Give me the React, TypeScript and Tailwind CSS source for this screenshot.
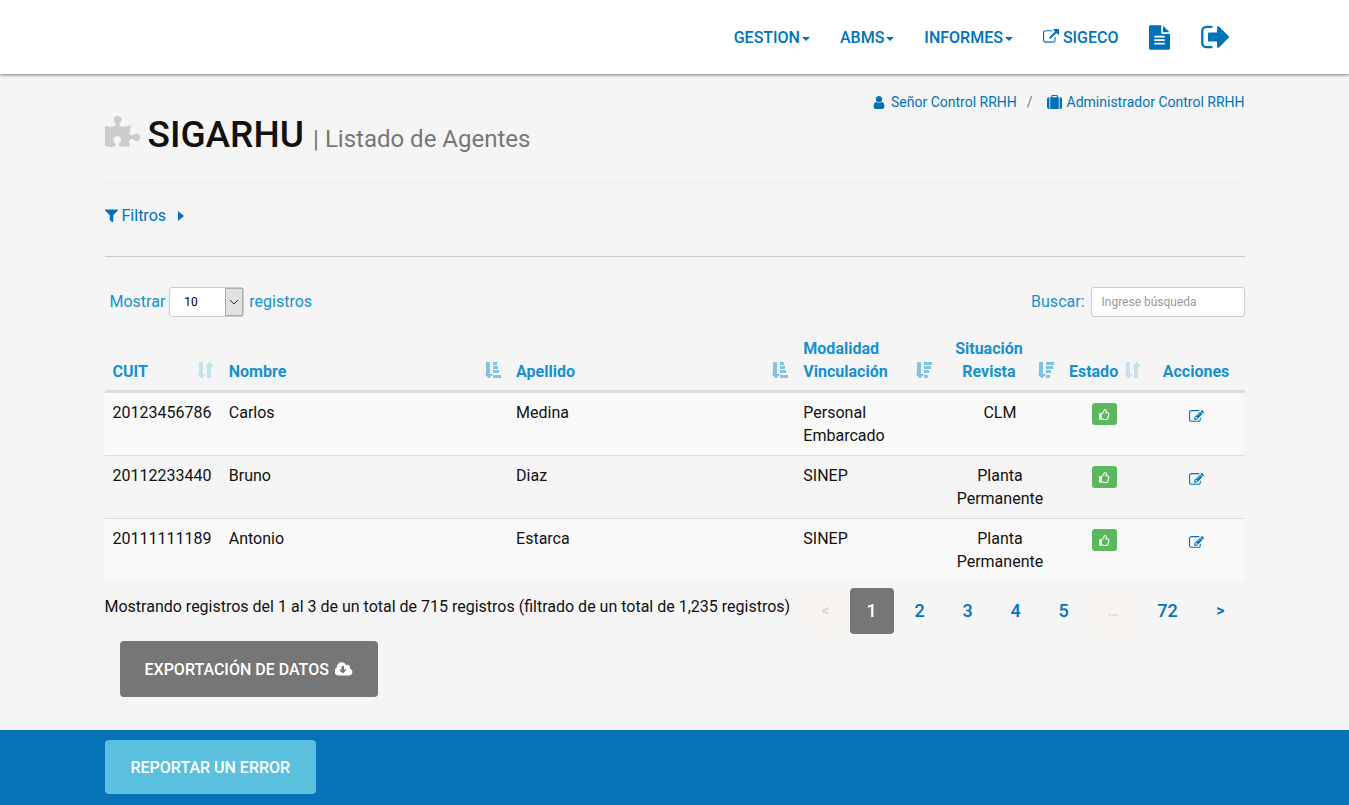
import React from "react";
import { FaPuzzlePiece, FaRegThumbsUp } from "react-icons/fa";

const ICONS = {
  externalLink:
    "M1408 928v320q0 119-84.5 203.5t-203.5 84.5h-832q-119 0-203.5-84.5t-84.5-203.5v-832q0-119 84.5-203.5t203.5-84.5h704q14 0 23 9t9 23v64q0 14-9 23t-23 9h-704q-66 0-113 47t-47 113v832q0 66 47 113t113 47h832q66 0 113-47t47-113v-320q0-14 9-23t23-9h64q14 0 23 9t9 23zm384-864v512q0 26-19 45t-45 19-45-19l-176-176-652 652q-10 10-23 10t-23-10l-114-114q-10-10-10-23t10-23l652-652-176-176q-19-19-19-45t19-45 45-19h512q26 0 45 19t19 45z",
  fileText:
    "M1596 476q14 14 28 36h-472v-472q22 14 36 28zm-476 164h544v1056q0 40-28 68t-68 28h-1344q-40 0-68-28t-28-68v-1600q0-40 28-68t68-28h800v544q0 40 28 68t68 28zm160 736v-64q0-14-9-23t-23-9h-704q-14 0-23 9t-9 23v64q0 14 9 23t23 9h704q14 0 23-9t9-23zm0-256v-64q0-14-9-23t-23-9h-704q-14 0-23 9t-9 23v64q0 14 9 23t23 9h704q14 0 23-9t9-23zm0-256v-64q0-14-9-23t-23-9h-704q-14 0-23 9t-9 23v64q0 14 9 23t23 9h704q14 0 23-9t9-23z",
  signOut:
    "M704 1440q0 4 1 20t.5 26.5-3 23.5-10 19.5-20.5 6.5h-320q-119 0-203.5-84.5t-84.5-203.5v-704q0-119 84.5-203.5t203.5-84.5h320q13 0 22.5 9.5t9.5 22.5q0 4 1 20t.5 26.5-3 23.5-10 19.5-20.5 6.5h-320q-66 0-113 47t-47 113v704q0 66 47 113t113 47h312l11.5 1 11.5 3 8 5.5 7 9 2 13.5zm928-544q0 26-19 45l-544 544q-19 19-45 19t-45-19-19-45v-288h-448q-26 0-45-19t-19-45v-384q0-26 19-45t45-19h448v-288q0-26 19-45t45-19 45 19l544 544q19 19 19 45z",
  user: "M1536 1399q0 109-62.5 187t-150.5 78h-854q-88 0-150.5-78t-62.5-187q0-85 8.5-160.5t31.5-152 58.5-131 94-89 134.5-34.5q131 128 313 128t313-128q76 0 134.5 34.5t94 89 58.5 131 31.5 152 8.5 160.5zm-256-887q0 159-112.5 271.5t-271.5 112.5-271.5-112.5-112.5-271.5 112.5-271.5 271.5-112.5 271.5 112.5 112.5 271.5z",
  suitcase:
    "M640 256h512v-128h-512v128zm-352 0v1408h-64q-92 0-158-66t-66-158v-960q0-92 66-158t158-66h64zm1120 0v1408h-1024v-1408h128v-160q0-40 28-68t68-28h576q40 0 68 28t28 68v160h128zm384 224v960q0 92-66 158t-158 66h-64v-1408h64q92 0 158 66t66 158z",
  filter:
    "M1595 295q17 41-14 70l-493 493v742q0 42-39 59-13 5-25 5-27 0-45-19l-256-256q-19-19-19-45v-486l-493-493q-31-29-14-70 17-39 59-39h1280q42 0 59 39z",
  edit: "M888 1184l116-116-152-152-116 116v56h96v96h56zm440-720q-16-16-33 1l-350 350q-17 17-1 33t33-1l350-350q17-17 1-33zm80 594v190q0 119-84.5 203.5t-203.5 84.5h-832q-119 0-203.5-84.5t-84.5-203.5v-832q0-119 84.5-203.5t203.5-84.5h832q63 0 117 25 15 7 18 23 3 17-9 29l-49 49q-14 14-32 8-23-6-45-6h-832q-66 0-113 47t-47 113v832q0 66 47 113t113 47h832q66 0 113-47t47-113v-126q0-13 9-22l64-64q15-15 35-7t20 29zm-96-738l288 288-672 672h-288v-288zm444 132l-92 92-288-288 92-92q28-28 68-28t68 28l152 152q28 28 28 68t-28 68z",
  cloudDownload:
    "M1216 928q0-14-9-23t-23-9h-224v-352q0-13-9.5-22.5t-22.5-9.5h-192q-13 0-22.5 9.5t-9.5 22.5v352h-224q-13 0-22.5 9.5t-9.5 22.5q0 14 9 23l352 352q9 9 23 9t23-9l351-351q10-12 10-24zm640 224q0 159-112.5 271.5t-271.5 112.5h-1088q-185 0-316.5-131.5t-131.5-316.5q0-130 70-240t188-165q-2-30-2-43 0-212 150-362t362-150q156 0 285.5 87t188.5 231q71-62 166-62 106 0 181 75t75 181q0 76-41 138 130 31 213.5 135.5t83.5 238.5z",
};

function Icon({
  name,
  className,
  box = "0 0 1792 1792",
}: {
  name: keyof typeof ICONS;
  className: string;
  box?: string;
}) {
  return (
    <svg viewBox={box} fill="currentColor" className={className} aria-hidden="true">
      <path d={ICONS[name]} />
    </svg>
  );
}

type Sort = "both" | "asc" | "desc";

function SortIcon({ kind }: { kind: Sort }) {
  const bars = kind === "asc" ? [4, 5, 6, 8] : [8, 7, 5, 4];
  return (
    <svg
      viewBox="0 0 17 16"
      fill="#1591d1"
      shapeRendering={kind === "both" ? "auto" : "crispEdges"}
      className={
        kind === "both"
          ? "absolute right-[7px] bottom-3 h-4 w-[17px] opacity-20"
          : "absolute right-[7px] bottom-3 h-4 w-[17px] opacity-50"
      }
      aria-hidden="true"
    >
      <path d="M2 0h4v12h3l-4 4h-1l-4-4h2z" />
      {kind === "both" ? (
        <path d="M10 16h4V5h3l-4-5h-1L8 5h2z" />
      ) : (
        bars.map((w, i) => <rect key={i} x="9" y={i * 4 + (i === 3 ? 1 : 0)} width={w} height="3" />)
      )}
    </svg>
  );
}

function Caret() {
  return (
    <svg viewBox="0 0 8 4" className="ml-[2px] mt-1 h-1 w-2" fill="currentColor" aria-hidden="true">
      <path d="M0 0h8L4 4z" />
    </svg>
  );
}

const COLUMNS: { label: string; width: string; sort?: Sort; center?: boolean }[] = [
  { label: "CUIT", width: "w-[10.2%]", sort: "both" },
  { label: "Nombre", width: "w-[25.2%]", sort: "asc" },
  { label: "Apellido", width: "w-[25.2%]", sort: "asc" },
  { label: "Modalidad Vinculación", width: "w-[12.6%]", sort: "desc" },
  { label: "Situación Revista", width: "w-[10.7%]", sort: "desc", center: true },
  { label: "Estado", width: "w-[7.6%]", sort: "both", center: true },
  { label: "Acciones", width: "w-[8.5%]", center: true },
];

const ROWS = [
  ["20123456786", "Carlos", "Medina", "Personal Embarcado", "CLM"],
  ["20112233440", "Bruno", "Diaz", "SINEP", "Planta Permanente"],
  ["20111111189", "Antonio", "Estarca", "SINEP", "Planta Permanente"],
];

const PAGES = ["<", "1", "2", "3", "4", "5", "…", "72", ">"];

function pageClass(p: string) {
  if (p === "1") return "h-[46px] w-11 rounded bg-[#767676] text-lg font-medium text-white";
  if (p === "<") return "h-[46px] w-10 rounded bg-[#f8f5f0] text-base font-bold text-[#dfd7ca]";
  if (p === "…") return "h-[46px] w-[47px] rounded bg-[#f8f5f0] text-sm font-bold text-[#dfd7ca]";
  if (p === ">") return "h-[46px] w-11 text-base font-bold text-[#0072bb]";
  if (p === "72") return "h-[46px] w-[54px] text-lg font-medium text-[#0072bb]";
  return "h-[46px] w-11 text-lg font-medium text-[#0072bb]";
}

export default function App() {
  return (
    <div className="flex min-h-screen flex-col bg-[#f5f5f5] font-[Roboto,sans-serif] text-base leading-[23px] text-[#111]">
      <header className="bg-white shadow-[0_1px_3px_rgba(0,0,0,0.5)]">
        <nav className="mx-auto flex h-[74px] max-w-[1140px] items-center justify-end gap-[30px] pr-4 font-medium text-[#0072bb]">
          {["GESTION", "ABMS", "INFORMES"].map((t) => (
            <button key={t} type="button" className="flex items-center">
              {t}
              <Caret />
            </button>
          ))}
          <a href="#sigeco" className="flex items-center gap-1">
            <Icon name="externalLink" className="h-4 w-4" />
            SIGECO
          </a>
          <a href="#documentos" aria-label="Documentos">
            <Icon name="fileText" box="128 0 1536 1792" className="h-[25px] w-[21px]" />
          </a>
          <a href="#salir" aria-label="Salir">
            <Icon name="signOut" box="0 224 1632 1344" className="h-6 w-[29px]" />
          </a>
        </nav>
      </header>

      <main className="mx-auto w-full max-w-[1140px] flex-1 pb-[33px]">
        <div className="flex items-center justify-end pt-4 text-sm leading-6 text-[#0072bb]">
          <a href="#usuario" className="flex items-center gap-[5px]">
            <Icon name="user" box="128 0 1536 1792" className="h-[15px] w-[14px]" />
            Señor Control RRHH
          </a>
          <span className="px-[10px] text-[#777]">/</span>
          <a href="#rol" className="ml-1 flex items-center gap-[5px]">
            <Icon name="suitcase" className="h-[15px] w-[15px]" />
            Administrador Control RRHH
          </a>
        </div>

        <div className="flex items-start border-b border-[#eee] pb-[26px]">
          <FaPuzzlePiece className="mr-2 h-[35px] w-[35px] text-[#ccc]" aria-hidden="true" />
          <h1 className="text-[37px] leading-[42px] font-medium">
            SIGARHU <small className="text-2xl font-normal text-[#777]">| Listado de Agentes</small>
          </h1>
        </div>

        <div className="border-b border-[#ccc] pt-[21px] pb-[29px]">
          <button type="button" className="flex items-center gap-1 text-[#0072bb]">
            <Icon name="filter" box="192 192 1408 1408" className="h-[13px] w-[13px]" />
            Filtros
            <svg viewBox="0 0 6 10" className="ml-2 h-[10px] w-[6px]" fill="currentColor" aria-hidden="true">
              <path d="M0 0l6 5-6 5z" />
            </svg>
          </button>
        </div>

        <div className="flex items-center justify-between pt-[30px] pl-[5px] text-[#1591d1]">
          <div className="flex items-center">
            <label htmlFor="cantidad" className="pb-[2px]">Mostrar</label>
            <span className="relative mr-[5px] ml-1 block">
              <select
                id="cantidad"
                defaultValue="10"
                className="block h-[30px] w-[75px] appearance-none rounded-[3px] border border-[#ccc] bg-white pl-[14px] text-xs text-black"
              >
                <option>10</option>
                <option>25</option>
                <option>50</option>
              </select>
              <svg
                viewBox="0 0 18 28"
                className="pointer-events-none absolute top-px right-px h-7 w-[18px]"
                fill="none"
                aria-hidden="true"
              >
                <rect x="0.5" y="0.5" width="17" height="27" fill="#e1e1e1" stroke="#adadad" />
                <path d="M5 12l4 4 4-4" stroke="#333" />
              </svg>
            </span>
            <span className="pb-[2px]">registros</span>
          </div>
          <div className="flex items-center gap-[6px]">
            <label htmlFor="buscar" className="pb-[2px]">Buscar:</label>
            <input
              id="buscar"
              type="search"
              placeholder="Ingrese búsqueda"
              className="h-[30px] w-[154px] rounded-[3px] border border-[#ccc] bg-white px-[10px] text-xs text-black placeholder:text-[#999]"
            />
          </div>
        </div>

        <table className="mt-3 w-full table-fixed border-collapse">
          <thead>
            <tr className="border-b-3 border-[#ddd] text-[#1591d1]">
              {COLUMNS.map((c) => (
                <th
                  key={c.label}
                  scope="col"
                  className={`relative pt-2 pb-[7px] pl-2 align-bottom font-bold ${c.width} ${
                    c.sort ? "pr-[30px]" : "pr-2"
                  } ${c.center ? "text-center" : "text-left"}`}
                >
                  {c.label}
                  {c.sort && <SortIcon kind={c.sort} />}
                </th>
              ))}
            </tr>
          </thead>
          <tbody>
            {ROWS.map((r) => (
              <tr key={r[0]} className="border-t border-[#ddd] align-top odd:bg-[#f9f9f9] first:border-t-0">
                {r.map((v, i) => (
                  <td
                    key={i}
                    className={
                      i === 4 ? "p-2 text-center" : i === 3 ? "py-2 pr-[30px] pl-2" : "p-2"
                    }
                  >
                    {v}
                  </td>
                ))}
                <td className="p-2 text-center">
                  <button
                    type="button"
                    aria-label="Activo"
                    className="mt-[2px] inline-flex h-[22px] w-[25px] items-center justify-center rounded-[3px] bg-[#5cb85c] align-top text-white"
                  >
                    <FaRegThumbsUp className="h-[11px] w-[11px]" />
                  </button>
                </td>
                <td className="p-2 text-center">
                  <a href="#editar" aria-label="Editar" className="mt-2 inline-block align-top text-[#0072bb]">
                    <Icon name="edit" className="h-[15px] w-[15px]" />
                  </a>
                </td>
              </tr>
            ))}
          </tbody>
        </table>

        <div className="flex items-start justify-between pt-[7px]">
          <p className="pt-[7px] whitespace-nowrap">
            Mostrando registros del 1 al 3 de un total de 715 registros (filtrado de un total de 1,235 registros)
          </p>
          <nav aria-label="Paginación" className="flex gap-1 pr-[2px]">
            {PAGES.map((p) => (
              <button key={p} type="button" className={pageClass(p)}>
                {p}
              </button>
            ))}
          </nav>
        </div>

        <button
          type="button"
          className="mt-[7px] ml-[15px] flex h-14 items-center gap-[6px] rounded bg-[#767676] px-[25px] font-medium text-white"
        >
          EXPORTACIÓN DE DATOS
          <Icon name="cloudDownload" box="0 0 1920 1792" className="h-[17px] w-[18px]" />
        </button>
      </main>

      <footer className="bg-[#0872b9]">
        <div className="mx-auto max-w-[1140px] pt-[10px] pb-[11px]">
          <button type="button" className="block h-[54px] rounded bg-[#5bc0de] px-[26px] font-medium text-white">
            REPORTAR UN ERROR
          </button>
        </div>
      </footer>
    </div>
  );
}
